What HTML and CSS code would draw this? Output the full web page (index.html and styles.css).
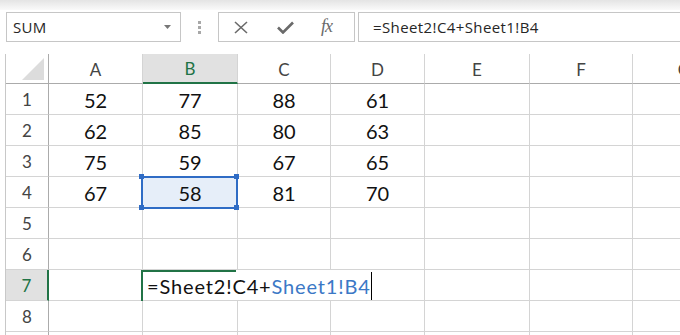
FILE: index.html
```
<!DOCTYPE html>
<html>
<head>
<meta charset="utf-8">
<link rel="stylesheet" href="styles.css">
</head>
<body>
<div class="topstrip"></div>
<div class="toolbar">
  <div class="namebox">
    <span class="name">SUM</span>
    <svg class="caret" width="7" height="4" viewBox="0 0 7 4"><path d="M0 0H7L3.5 4Z" fill="#777"/></svg>
  </div>
  <div class="grip"><i></i><i></i><i></i></div>
  <div class="fbtns">
    <svg class="ico" width="16" height="13" viewBox="0 0 16 13"><path d="M2 1L14 12M14 1L2 12" stroke="#6a6a6a" stroke-width="1.6" fill="none"/></svg>
    <svg class="ico" width="17" height="13" viewBox="0 0 17 13"><path d="M1 6.5L6 11.5L16 1.5" stroke="#6a6a6a" stroke-width="2.6" fill="none" stroke-linejoin="miter"/></svg>
    <span class="fx">fx</span>
  </div>
  <div class="fbar">=Sheet2!C4+Sheet1!B4</div>
</div>
<div class="sheet">
  <div class="hdr corner"><span class="tri"></span></div>
  <div class="hdr col">A</div>
  <div class="hdr col active">B</div>
  <div class="hdr col">C</div>
  <div class="hdr col">D</div>
  <div class="hdr col">E</div>
  <div class="hdr col">F</div>
  <div class="hdr col">G</div>

  <div class="hdr row">1</div><div class="c">52</div><div class="c">77</div><div class="c">88</div><div class="c">61</div><div class="c"></div><div class="c"></div><div class="c"></div>
  <div class="hdr row">2</div><div class="c">62</div><div class="c">85</div><div class="c">80</div><div class="c">63</div><div class="c"></div><div class="c"></div><div class="c"></div>
  <div class="hdr row">3</div><div class="c">75</div><div class="c">59</div><div class="c">67</div><div class="c">65</div><div class="c"></div><div class="c"></div><div class="c"></div>
  <div class="hdr row">4</div><div class="c">67</div><div class="c sel">58</div><div class="c">81</div><div class="c">70</div><div class="c"></div><div class="c"></div><div class="c"></div>
  <div class="hdr row">5</div><div class="c"></div><div class="c"></div><div class="c"></div><div class="c"></div><div class="c"></div><div class="c"></div><div class="c"></div>
  <div class="hdr row">6</div><div class="c"></div><div class="c"></div><div class="c"></div><div class="c"></div><div class="c"></div><div class="c"></div><div class="c"></div>
  <div class="hdr row active">7</div><div class="c"></div><div class="c edit"><span class="etext">=Sheet2!C4+<span class="ref">Sheet1!B4</span></span><span class="cursor"></span></div><div class="c"></div><div class="c"></div><div class="c"></div>
  <div class="hdr row">8</div><div class="c"></div><div class="c"></div><div class="c"></div><div class="c"></div><div class="c"></div><div class="c"></div><div class="c"></div>
  <div class="hdr row"></div><div class="c"></div><div class="c"></div><div class="c"></div><div class="c"></div><div class="c"></div><div class="c"></div><div class="c"></div>
</div>
</body>
</html>
```
FILE: styles.css
```
html, body {
  margin: 0;
  padding: 0;
  background: #fff;
  overflow: hidden;
  width: 680px;
  height: 335px;
}
.topstrip {
  height: 10px;
  background: linear-gradient(#e4e4e4, #fafafa);
}
.toolbar {
  display: flex;
  align-items: stretch;
  height: 30px;
  margin-top: 2px;
  padding-left: 6px;
  font-family: "Open Sans", sans-serif;
}
.namebox {
  box-sizing: border-box;
  width: 175px;
  border: 1px solid #c6c6c6;
  display: flex;
  align-items: center;
  justify-content: space-between;
  padding: 0 9px 0 6px;
}
.name {
  font-size: 15px;
  letter-spacing: 0.3px;
  color: #262626;
}
.grip {
  width: 37px;
  display: flex;
  flex-direction: column;
  align-items: center;
  justify-content: center;
  gap: 2px;
}
.grip i {
  display: block;
  width: 3px;
  height: 3px;
  background: #a8a8a8;
}
.fbtns {
  box-sizing: border-box;
  width: 137px;
  border: 1px solid #c6c6c6;
  display: flex;
  align-items: center;
  padding-left: 14px;
  gap: 28px;
}
.fx {
  font-family: "Liberation Serif", serif;
  font-style: italic;
  font-size: 18px;
  color: #6a6a6a;
  letter-spacing: -1px;
  margin-left: -1px;
  margin-top: -2px;
}
.fbar {
  flex: 1;
  margin-left: 3px;
  border: 1px solid #c6c6c6;
  border-right: none;
  display: flex;
  align-items: center;
  padding-left: 14px;
  font-size: 15px;
  letter-spacing: 0.4px;
  color: #262626;
}
.sheet {
  margin-top: 12px;
  margin-left: 5px;
  border-left: 1px solid #c8c8c8;
  display: grid;
  grid-template-columns: 43px 94px 95px 93px 94px 105px 103px 103px;
  grid-template-rows: 30px;
  grid-auto-rows: 31px;
  font-family: "Lato", sans-serif;
}
.sheet > div {
  box-sizing: border-box;
  border-right: 1px solid #d4d4d4;
  border-bottom: 1px solid #d4d4d4;
  display: flex;
  align-items: center;
  justify-content: center;
}
.hdr {
  font-size: 17px;
  color: #444;
  background: #fff;
}
.hdr.col {
  border-bottom-color: #ababab;
  padding-top: 1px;
}
.hdr.row {
  border-right-color: #ababab;
  padding-top: 1px;
}
.corner {
  border-bottom-color: #ababab !important;
  border-right-color: #ababab !important;
  position: relative;
}
.tri {
  position: absolute;
  right: 4px;
  bottom: 3px;
  width: 0;
  height: 0;
  border-left: 22px solid transparent;
  border-bottom: 22px solid #dcdcdc;
}
.hdr.col.active {
  background: #e1e1e1;
  color: #217346;
  border-bottom: 2px solid #217346;
}
.hdr.row.active {
  background: #e1e1e1;
  color: #217346;
  border-right: 2px solid #217346;
}
.c {
  font-size: 20px;
  color: #111;
  padding-top: 2px;
}
.sel {
  position: relative;
  background: #e6eef9;
}
.sel::before {
  content: "";
  position: absolute;
  left: -2px;
  top: -1px;
  right: -1px;
  bottom: -2px;
  border: 2px solid #2f6cc5;
}
.sel::after {
  content: "";
  position: absolute;
  left: -4px;
  top: -3px;
  width: 5px;
  height: 5px;
  background: #2f6cc5;
  box-shadow: 95px 0 0 #2f6cc5, 0 31px 0 #2f6cc5, 95px 31px 0 #2f6cc5;
}
.sheet > .edit {
  grid-column: span 3;
  justify-content: flex-start;
  position: relative;
  padding-left: 4px;
  white-space: nowrap;
  letter-spacing: 0.85px;
}
.edit::before {
  content: "";
  position: absolute;
  left: -2px;
  top: 0;
  width: 95px;
  height: 31px;
  box-sizing: border-box;
  border-top: 2px solid #217346;
  border-left: 2px solid #217346;
}
.ref {
  color: #3b78c6;
}
.cursor {
  display: block;
  width: 1px;
  height: 28px;
  background: #000;
  margin-left: 0;
}
```
